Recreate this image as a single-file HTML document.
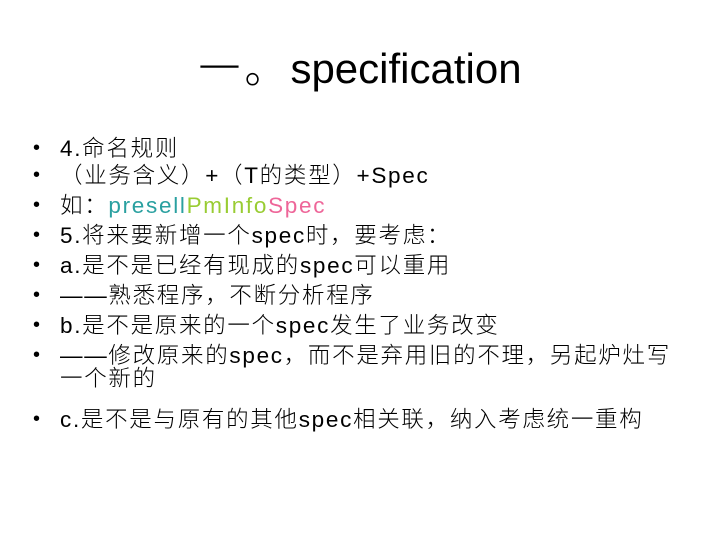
<!DOCTYPE html>
<html><head><meta charset="utf-8"><style>
html,body{margin:0;padding:0;background:#fff;}
body{width:720px;height:540px;position:relative;overflow:hidden;font-family:"Liberation Sans","Noto Sans CJK SC",sans-serif;color:#000;}
h1{position:absolute;top:44px;left:0;width:720px;text-align:center;margin:0;font-weight:normal;font-size:42px;line-height:50px;}
h1 span{letter-spacing:4px;font-weight:300}
.l{position:absolute;left:60px;font-size:22.5px;line-height:23px;width:660px;font-weight:300;letter-spacing:1.7px}
.l:before{content:"•";position:absolute;left:-27px;font-size:20px}
.t{color:#2aa0a0}.g{color:#99cc33}.p{color:#ee6699}
</style></head><body>
<h1><span>一。</span>specification</h1>
<div class="l" style="top:137px">4.命名规则</div>
<div class="l" style="top:164px">（业务含义）+（T的类型）+Spec</div>
<div class="l" style="top:194px">如：<span class="t">presell</span><span class="g">PmInfo</span><span class="p">Spec</span></div>
<div class="l" style="top:224px">5.将来要新增一个spec时，要考虑：</div>
<div class="l" style="top:254px">a.是不是已经有现成的spec可以重用</div>
<div class="l" style="top:284px">——熟悉程序，不断分析程序</div>
<div class="l" style="top:314px">b.是不是原来的一个spec发生了业务改变</div>
<div class="l" style="top:344px">——修改原来的spec，而不是弃用旧的不理，另起炉灶写<br>一个新的</div>
<div class="l" style="top:408px">c.是不是与原有的其他spec相关联，纳入考虑统一重构</div>
</body></html>
